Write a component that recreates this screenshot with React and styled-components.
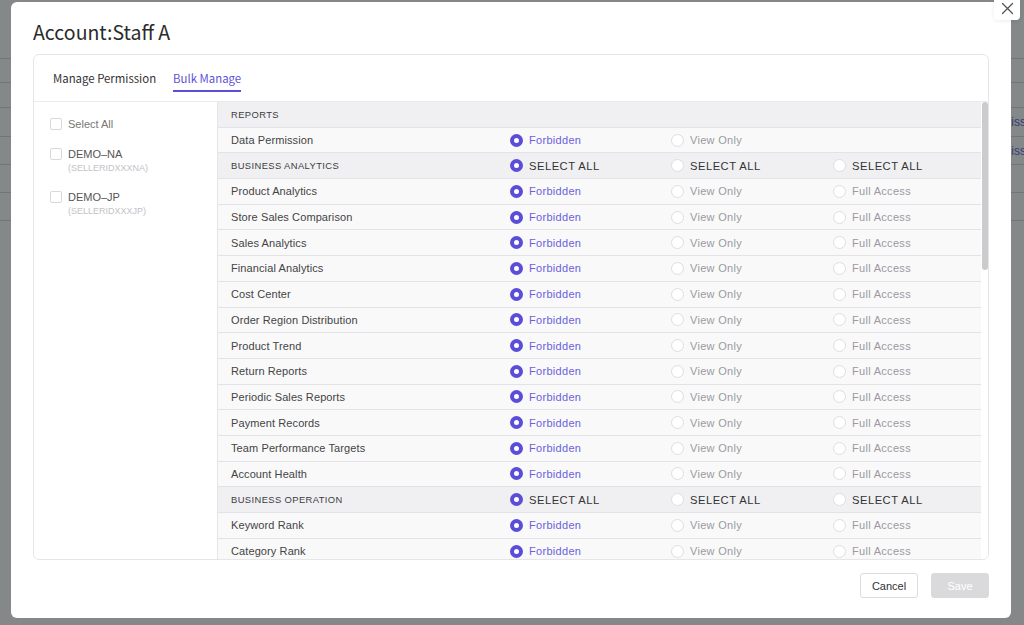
import React from "react";
import styled, { createGlobalStyle } from "styled-components";

const GlobalStyle = createGlobalStyle`
  html, body {
    margin: 0;
    padding: 0;
    background: #fff;
  }
  * {
    box-sizing: border-box;
  }
`;

const PURPLE = "#5a4ed8";

const Screen = styled.div`
  position: relative;
  width: 1024px;
  height: 625px;
  overflow: hidden;
  font-family: "Liberation Sans", Arial, sans-serif;
`;

const BehindPage = styled.div`
  display: flex;
  flex-direction: column;
  width: 100%;
`;

const BehindRow = styled.div`
  height: ${(p) => p.$h}px;
  border-bottom: 1px solid #d6d9dc;
  display: flex;
  align-items: center;
  justify-content: flex-end;
  font-size: 12px;
  color: #5c5fd0;
  white-space: nowrap;
`;

const Mask = styled.div`
  position: absolute;
  inset: 0;
  background: rgba(22, 26, 28, 0.52);
`;

const Modal = styled.div`
  position: absolute;
  left: 11px;
  top: 2px;
  width: 1000px;
  height: 616px;
  background: #fff;
  border-radius: 6px;
  padding: 16px 22px 0;
  display: flex;
  flex-direction: column;
`;

const CloseButton = styled.button`
  position: absolute;
  top: -8px;
  right: -9px;
  width: 26px;
  height: 26px;
  border: none;
  border-radius: 4px;
  background: #fff;
  box-shadow: 0 1px 4px rgba(0, 0, 0, 0.08);
  display: flex;
  align-items: flex-end;
  justify-content: center;
  padding: 0 0 5px;
  color: #555;
`;

const Title = styled.h1`
  margin: 0 0 8px;
  font-family: "Noto Sans CJK SC", "Noto Sans", sans-serif;
  font-weight: 400;
  font-size: 19.5px;
  line-height: 28px;
  color: #2b2b2b;
`;

const Card = styled.div`
  height: 506px;
  border: 1px solid #e6e6e9;
  border-radius: 6px;
  display: flex;
  flex-direction: column;
  overflow: hidden;
`;

const TabBar = styled.div`
  height: 47px;
  flex-shrink: 0;
  display: flex;
  align-items: flex-start;
  gap: 17px;
  padding: 14px 0 0 19px;
  border-bottom: 1px solid #ebebee;
`;

const Tab = styled.div`
  font-family: "Noto Sans CJK SC", "Noto Sans", sans-serif;
  font-size: 11.4px;
  line-height: 18px;
  padding-bottom: 3px;
  color: ${(p) => (p.$active ? "#5d53d6" : "#333")};
  border-bottom: 2px solid ${(p) => (p.$active ? PURPLE : "transparent")};
`;

const Body = styled.div`
  flex: 1;
  display: flex;
  min-height: 0;
`;

const SidePane = styled.div`
  width: 184px;
  flex-shrink: 0;
  border-right: 1px solid #e6e6e9;
  padding: 14px 0 0 16px;
  display: flex;
  flex-direction: column;
  gap: 14px;
`;

const Account = styled.label`
  display: flex;
  align-items: flex-start;
  gap: 6px;
`;

const CheckBox = styled.span`
  width: 12px;
  height: 12px;
  margin-top: 2px;
  border: 1px solid #d9d9dc;
  border-radius: 2px;
  background: #fff;
  flex-shrink: 0;
`;

const AccountText = styled.div`
  display: flex;
  flex-direction: column;
`;

const AccountName = styled.span`
  font-size: 11px;
  line-height: 16px;
  color: ${(p) => (p.$muted ? "#777" : "#555")};
`;

const SellerId = styled.span`
  font-size: 9px;
  line-height: 13px;
  color: #c2c2c7;
`;

const TableArea = styled.div`
  flex: 1;
  display: flex;
  min-width: 0;
`;

const Rows = styled.div`
  flex: 1;
  display: flex;
  flex-direction: column;
  overflow: hidden;
`;

const Row = styled.div`
  flex-shrink: 0;
  display: grid;
  grid-template-columns: 291px 161px 162px 1fr;
  align-items: center;
  height: 25.7px;
  border-bottom: 1px solid #e3e3e7;
  background: ${(p) => (p.$section ? "#f0f0f3" : "#f9f9fa")};
`;

const RowName = styled.div`
  padding-left: 13px;
  font-size: ${(p) => (p.$section ? "9.4px" : "11px")};
  letter-spacing: ${(p) => (p.$section ? "0.4px" : "0.1px")};
  color: ${(p) => (p.$section ? "#3c3c40" : "#444")};
`;

const Option = styled.div`
  display: flex;
  align-items: center;
  gap: 6px;
  font-size: ${(p) => (p.$section ? "11.2px" : "11px")};
  letter-spacing: ${(p) => (p.$section ? "0.5px" : "0.3px")};
  color: ${(p) =>
    p.$section ? "#333" : p.$checked ? "#6a61dc" : "#9a9aa0"};
`;

const Radio = styled.span`
  width: 13px;
  height: 13px;
  border-radius: 50%;
  background: #fff;
  flex-shrink: 0;
  margin-left: 1px;
  border: ${(p) => (p.$checked ? `4px solid ${PURPLE}` : "1px solid #dedee2")};
`;

const ScrollTrack = styled.div`
  width: 7px;
  flex-shrink: 0;
  padding-left: 1px;
  background: #fff;
`;

const ScrollThumb = styled.div`
  width: 6px;
  height: 168px;
  border-radius: 3px;
  background: #cbcbce;
`;

const Footer = styled.div`
  display: flex;
  justify-content: flex-end;
  gap: 13px;
  margin-top: 13px;
`;

const Button = styled.button`
  width: 58px;
  height: 25px;
  border-radius: 3px;
  font-family: "Liberation Sans", Arial, sans-serif;
  font-size: 11px;
  border: 1px solid ${(p) => (p.$primary ? "#dadadd" : "#dcdce0")};
  background: ${(p) => (p.$primary ? "#dadadd" : "#fff")};
  color: ${(p) => (p.$primary ? "#fff" : "#333")};
`;

const ACCOUNTS = [
  { name: "DEMO\u2013NA", id: "(SELLERIDXXXNA)" },
  { name: "DEMO\u2013JP", id: "(SELLERIDXXXJP)" },
];

const ROWS = [
  { section: true, name: "REPORTS", options: [] },
  { name: "Data Permission", options: ["Forbidden", "View Only"] },
  { section: true, name: "BUSINESS ANALYTICS" },
  { name: "Product Analytics" },
  { name: "Store Sales Comparison" },
  { name: "Sales Analytics" },
  { name: "Financial Analytics" },
  { name: "Cost Center" },
  { name: "Order Region Distribution" },
  { name: "Product Trend" },
  { name: "Return Reports" },
  { name: "Periodic Sales Reports" },
  { name: "Payment Records" },
  { name: "Team Performance Targets" },
  { name: "Account Health" },
  { section: true, name: "BUSINESS OPERATION" },
  { name: "Keyword Rank" },
  { name: "Category Rank" },
];

const DEFAULT_OPTIONS = ["Forbidden", "View Only", "Full Access"];
const SECTION_OPTIONS = ["SELECT ALL", "SELECT ALL", "SELECT ALL"];

// the page under the mask, only its right edge peeks out
const BEHIND_ROWS = [
  { h: 59 },
  { h: 24 },
  { h: 25 },
  { h: 29, text: "Permission" },
  { h: 28, text: "Permission" },
  { h: 28 },
  { h: 28 },
];

function CloseIcon() {
  return (
    <svg width="13" height="13" viewBox="0 0 13 13" fill="none">
      <path d="M1.5 1.5 L11.5 11.5 M11.5 1.5 L1.5 11.5" stroke="#555" strokeWidth="1.3" strokeLinecap="round" />
    </svg>
  );
}

function PermissionRow({ row }) {
  const options = row.options || (row.section ? SECTION_OPTIONS : DEFAULT_OPTIONS);
  return (
    <Row $section={row.section}>
      <RowName $section={row.section}>{row.name}</RowName>
      {options.map((label, i) => (
        <Option key={i} $section={row.section} $checked={i === 0}>
          <Radio $checked={i === 0} />
          {label}
        </Option>
      ))}
    </Row>
  );
}

export default function App() {
  return (
    <Screen>
      <GlobalStyle />
      <BehindPage>
        {BEHIND_ROWS.map((r, i) => (
          <BehindRow key={i} $h={r.h}>
            {r.text && <span style={{ marginRight: -18 }}>{r.text}</span>}
          </BehindRow>
        ))}
      </BehindPage>
      <Mask />
      <Modal>
        <CloseButton aria-label="close">
          <CloseIcon />
        </CloseButton>
        <Title>Account:Staff A</Title>
        <Card>
          <TabBar>
            <Tab>Manage Permission</Tab>
            <Tab $active>Bulk Manage</Tab>
          </TabBar>
          <Body>
            <SidePane>
              <Account>
                <CheckBox />
                <AccountName $muted>Select All</AccountName>
              </Account>
              {ACCOUNTS.map((a) => (
                <Account key={a.id}>
                  <CheckBox />
                  <AccountText>
                    <AccountName>{a.name}</AccountName>
                    <SellerId>{a.id}</SellerId>
                  </AccountText>
                </Account>
              ))}
            </SidePane>
            <TableArea>
              <Rows>
                {ROWS.map((row) => (
                  <PermissionRow key={row.name} row={row} />
                ))}
              </Rows>
              <ScrollTrack>
                <ScrollThumb />
              </ScrollTrack>
            </TableArea>
          </Body>
        </Card>
        <Footer>
          <Button>Cancel</Button>
          <Button $primary>Save</Button>
        </Footer>
      </Modal>
    </Screen>
  );
}
